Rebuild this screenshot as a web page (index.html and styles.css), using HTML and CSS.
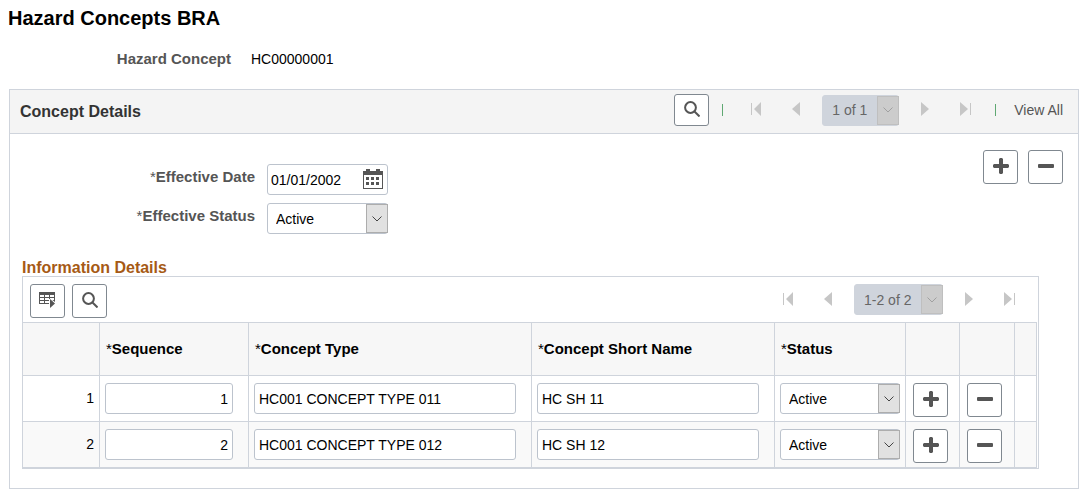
FILE: index.html
```html
<!DOCTYPE html>
<html lang="en">

<head>
    <meta charset="utf-8">
    <title>Hazard Concepts BRA</title>
    <meta name="viewport" content="width=device-width, initial-scale=1">
    <link rel="stylesheet" href="styles.css">
</head>

<body>

<!-- shared icons -->
<svg class="sprite" width="0" height="0" aria-hidden="true">
    <symbol id="search" viewBox="0 0 16 16">
        <circle cx="6.5" cy="6.5" r="5.4" fill="none" stroke="currentColor" stroke-width="2"/>
        <path d="M10.500 10.500l5 5" fill="none" stroke="currentColor" stroke-width="2"/>
    </symbol>
    <symbol id="plus" viewBox="0 0 16 16">
        <path d="M7 0h2l1 1v5h5l1 1v2l-1 1h-5v5l-1 1h-2l-1-1v-5h-5l-1-1v-2l1-1h5v-5z" fill="currentColor"/>
    </symbol>
    <symbol id="minus" viewBox="0 0 16 16">
        <rect x="0" y="6" width="16" height="4" rx="1" fill="currentColor"/>
    </symbol>
    <symbol id="grid" viewBox="0 0 17 16">
        <path d="M0 0h16v12H0z" fill="currentColor"/>
        <path d="M1 3h4v2H1zM6 3h4v2H6zM11 3h4v2h-4zM1 6h4v2H1zM6 6h4v2H6zM11 6h4v2h-4zM1 9h4v2H1zM6 9h4v2H6z" fill="#fff"/>
        <path d="M10 7h2l4 3h1v6h-7z" fill="#fff"/>
        <path d="M11 7l5 4.500-5 4.500z" fill="currentColor"/>
    </symbol>
    <symbol id="calendar" viewBox="0 0 20 20">
        <path d="M3 0h4v2h6V0h4v2h3v18H0V2h3zM1 6v13h18V6z" fill="currentColor" fill-rule="evenodd"/>
        <path d="M3 8h3v3H3zM8 8h3v3H8zM13 8h3v3h-3zM3 13h3v3H3zM8 13h3v3H8zM13 13h3v3h-3z" fill="currentColor"/>
    </symbol>
    <symbol id="chevron" viewBox="0 0 10 6">
        <path d="M.5.5L5 5 9.500.5" fill="none" stroke="currentColor" stroke-width="1"/>
    </symbol>
    <symbol id="first" viewBox="0 0 11 14">
        <path d="M0 1h1v12H0zM10 0v14L3 7z" fill="currentColor"/>
    </symbol>
    <symbol id="prev" viewBox="0 0 8 14">
        <path d="M8 0v14L0 7z" fill="currentColor"/>
    </symbol>
    <symbol id="next" viewBox="0 0 8 14">
        <path d="M0 0v14l8-7z" fill="currentColor"/>
    </symbol>
    <symbol id="last" viewBox="0 0 11 14">
        <path d="M0 0v14l8-7zM10 1h1v12h-1z" fill="currentColor"/>
    </symbol>
</svg>

<h1>Hazard Concepts BRA</h1>

<div class="key">
    <span class="key-label">Hazard Concept</span>
    <span>HC00000001</span>
</div>

<section class="panel">
    <div class="panel-header">
        <h2>Concept Details</h2>
        <button type="button" class="btn btn-search" aria-label="Find"><svg width="16" height="16"><use href="#search"/></svg></button>
        <span class="separator"></span>
        <div class="pager">
            <button type="button" class="nav" aria-label="First" disabled><svg width="11" height="14"><use href="#first"/></svg></button>
            <button type="button" class="nav" aria-label="Previous" disabled><svg width="8" height="14"><use href="#prev"/></svg></button>
            <span class="select select-page">
                <select aria-label="Row" disabled><option>1 of 1</option></select>
                <span class="arrow"><svg width="10" height="6"><use href="#chevron"/></svg></span>
            </span>
            <button type="button" class="nav" aria-label="Next" disabled><svg width="8" height="14"><use href="#next"/></svg></button>
            <button type="button" class="nav" aria-label="Last" disabled><svg width="11" height="14"><use href="#last"/></svg></button>
        </div>
        <span class="separator"></span>
        <a href="#" class="view-all">View All</a>
    </div>

    <form class="details">
        <div class="fields">
            <label for="eff_date"><span class="required">*</span>Effective Date</label>
            <span class="date">
                <input type="text" id="eff_date" name="eff_date" value="01/01/2002">
                <button type="button" class="date-button" aria-label="Choose a date"><svg width="20" height="20"><use href="#calendar"/></svg></button>
            </span>
            <label for="eff_status"><span class="required">*</span>Effective Status</label>
            <span class="select">
                <select id="eff_status" name="eff_status"><option>Active</option><option>Inactive</option></select>
                <span class="arrow"><svg width="10" height="6"><use href="#chevron"/></svg></span>
            </span>
        </div>
        <div class="row-buttons">
            <button type="button" class="btn" aria-label="Add"><svg width="16" height="16"><use href="#plus"/></svg></button>
            <button type="button" class="btn" aria-label="Delete"><svg width="16" height="16"><use href="#minus"/></svg></button>
        </div>
    </form>

    <h3>Information Details</h3>
    <div class="grid">
        <div class="grid-toolbar">
            <button type="button" class="btn" aria-label="Grid actions"><svg width="17" height="16"><use href="#grid"/></svg></button>
            <button type="button" class="btn" aria-label="Find"><svg width="16" height="16"><use href="#search"/></svg></button>
            <div class="pager">
                <button type="button" class="nav" aria-label="First" disabled><svg width="11" height="14"><use href="#first"/></svg></button>
                <button type="button" class="nav" aria-label="Previous" disabled><svg width="8" height="14"><use href="#prev"/></svg></button>
                <span class="select select-range">
                    <select aria-label="Rows" disabled><option>1-2 of 2</option></select>
                    <span class="arrow"><svg width="10" height="6"><use href="#chevron"/></svg></span>
                </span>
                <button type="button" class="nav" aria-label="Next" disabled><svg width="8" height="14"><use href="#next"/></svg></button>
                <button type="button" class="nav" aria-label="Last" disabled><svg width="11" height="14"><use href="#last"/></svg></button>
            </div>
        </div>
        <table>
            <colgroup>
                <col class="col-number">
                <col class="col-sequence">
                <col>
                <col class="col-name">
                <col class="col-status">
                <col class="col-add">
                <col class="col-delete">
                <col class="col-end">
            </colgroup>
            <thead>
                <tr>
                    <th></th>
                    <th><span class="required">*</span>Sequence</th>
                    <th><span class="required">*</span>Concept Type</th>
                    <th><span class="required">*</span>Concept Short Name</th>
                    <th><span class="required">*</span>Status</th>
                    <th></th>
                    <th></th>
                    <th></th>
                </tr>
            </thead>
            <tbody>
                <tr>
                    <td class="number">1</td>
                    <td><input type="text" class="sequence" aria-label="Sequence 1" value="1"></td>
                    <td><input type="text" aria-label="Concept Type 1" value="HC001 CONCEPT TYPE 011"></td>
                    <td><input type="text" aria-label="Concept Short Name 1" value="HC SH 11"></td>
                    <td class="status">
                        <span class="select">
                            <select aria-label="Status 1"><option>Active</option><option>Inactive</option></select>
                            <span class="arrow"><svg width="10" height="6"><use href="#chevron"/></svg></span>
                        </span>
                    </td>
                    <td class="action"><button type="button" class="btn" aria-label="Add row after 1"><svg width="16" height="16"><use href="#plus"/></svg></button></td>
                    <td class="action"><button type="button" class="btn" aria-label="Delete row 1"><svg width="16" height="16"><use href="#minus"/></svg></button></td>
                    <td></td>
                </tr>
                <tr>
                    <td class="number">2</td>
                    <td><input type="text" class="sequence" aria-label="Sequence 2" value="2"></td>
                    <td><input type="text" aria-label="Concept Type 2" value="HC001 CONCEPT TYPE 012"></td>
                    <td><input type="text" aria-label="Concept Short Name 2" value="HC SH 12"></td>
                    <td class="status">
                        <span class="select">
                            <select aria-label="Status 2"><option>Active</option><option>Inactive</option></select>
                            <span class="arrow"><svg width="10" height="6"><use href="#chevron"/></svg></span>
                        </span>
                    </td>
                    <td class="action"><button type="button" class="btn" aria-label="Add row after 2"><svg width="16" height="16"><use href="#plus"/></svg></button></td>
                    <td class="action"><button type="button" class="btn" aria-label="Delete row 2"><svg width="16" height="16"><use href="#minus"/></svg></button></td>
                    <td></td>
                </tr>
            </tbody>
        </table>
    </div>
</section>

</body>
</html>
```
FILE: styles.css
```css
* {
  box-sizing: border-box;
}

body {
  margin: 8px;
  font-family: "Liberation Sans", Arial, sans-serif;
  font-size: 14px;
  line-height: 20px;
  color: #000;
  background-color: #fff;
}

svg {
  display: block;
}

.sprite {
  position: absolute;
}

h1, h2, h3 {
  margin: 0;
  line-height: 20px;
}

h1 {
  font-size: 20px;
}

h2 {
  flex: 1;
  padding-top: 3px;
  font-size: 16px;
  color: #333;
}

h3 {
  margin: 25px 0 0 12px;
  font-size: 16px;
  line-height: 17px;
  color: #a65a15;
}

.key {
  display: flex;
  gap: 20px;
  margin-top: 21px;
}

.key-label {
  width: 223px;
  text-align: right;
  font-size: 15px;
  font-weight: bold;
  color: #555;
}

.required {
  font-weight: normal;
}

/* Controls */
input[type=text], select {
  display: block;
  width: 100%;
  height: 31px;
  padding: 0 4px;
  border: 1px solid #bcc3cd;
  border-radius: 3px;
  background-color: #fff;
  color: #000;
  font-family: inherit;
  font-size: 14px;
}

select {
  appearance: none;
  padding: 0 8px;
}

select:disabled {
  border-color: #cfd4dc;
  background-color: #cfd4dc;
  color: #666;
  opacity: 1;
}

.select {
  position: relative;
  display: block;
}

.arrow {
  position: absolute;
  top: 1px;
  right: 0;
  bottom: 1px;
  display: flex;
  align-items: center;
  justify-content: center;
  width: 22px;
  border: 1px solid #adadad;
  background-color: #e1e1e1;
  color: #444;
  pointer-events: none;
}

select:disabled + .arrow {
  border-color: #bfbfbf;
  background-color: #ccc;
  color: #a0a0a0;
}

.btn {
  display: flex;
  align-items: center;
  justify-content: center;
  width: 35px;
  height: 34px;
  padding: 0 0 2px;
  border: 1px solid #808890;
  border-radius: 3px;
  background-color: #fff;
  color: #555;
  cursor: pointer;
}

.btn-search {
  height: 32px;
}

/* Pager */
.pager {
  display: flex;
  align-items: center;
}

.nav {
  display: flex;
  justify-content: center;
  width: 40px;
  padding: 0 0 2px;
  border: none;
  background: none;
  color: #c6c6c6;
}

.select-page {
  width: 77px;
  margin: 0 6px;
}

.select-range {
  width: 89px;
  margin: 0 6px;
}

.select-page select, .select-range select {
  padding: 0 9px;
}

.separator {
  width: 1px;
  height: 12px;
  background-color: #5fa872;
}

/* Concept Details */
.panel {
  margin: 20px 0 0 1px;
  padding-bottom: 19px;
  border: 1px solid #cfd4dc;
}

.panel-header {
  display: flex;
  align-items: center;
  height: 44px;
  padding: 0 15px 3px 10px;
  border-bottom: 1px solid #cfd4dc;
  background-color: #f4f4f4;
}

.panel-header .separator {
  margin: 0 10px;
}

.panel-header .pager {
  margin-left: 3px;
}

.btn-search {
  margin-right: 3px;
}

.view-all {
  margin-left: 8px;
  color: #555;
  text-decoration: none;
}

.details {
  display: flex;
  justify-content: space-between;
  padding: 16px 15px 0 12px;
}

.fields {
  display: grid;
  grid-template-columns: 233px 121px;
  column-gap: 12px;
  row-gap: 8px;
  padding-top: 14px;
}

.fields label {
  padding-top: 3px;
  text-align: right;
  font-size: 15px;
  font-weight: bold;
  color: #555;
}

.date {
  position: relative;
}

.date input[type=text] {
  padding-left: 3px;
}

.date-button {
  position: absolute;
  top: 5px;
  right: 5px;
  padding: 0;
  border: none;
  background: none;
  color: #555;
}

.row-buttons {
  display: flex;
  gap: 10px;
}

/* Information Details */
.grid {
  margin: 0 39px 0 12px;
  padding-right: 1px;
  border: 1px solid #cfd4dc;
}

.grid-toolbar {
  display: flex;
  align-items: center;
  gap: 7px;
  height: 45px;
  padding: 2px 8px 0 7px;
}

.grid-toolbar .pager {
  margin: 0 0 2px auto;
}

table {
  width: 100%;
  table-layout: fixed;
  border-spacing: 0;
}

th, td {
  border-top: 1px solid #cfd4dc;
  border-left: 1px solid #cfd4dc;
}

th:first-child, td:first-child {
  border-left: none;
}

th:last-child, td:last-child {
  border-right: 1px solid #cfd4dc;
}

tr:last-child td {
  border-bottom: 1px solid #cfd4dc;
}

tr:nth-child(even) td {
  background-color: #f9f9f9;
}

th {
  height: 53px;
  padding: 0 6px;
  background-color: #f7f7f7;
  font-size: 15px;
  text-align: left;
}

td {
  padding: 7px 15px 4px 5px;
  vertical-align: top;
}

.number {
  padding-right: 5px;
  line-height: 31px;
  text-align: right;
}

td .sequence {
  text-align: right;
}

.status {
  padding-right: 5px;
}

.action {
  padding: 7px 7px 4px;
}

.col-number {
  width: 76px;
}

.col-sequence {
  width: 149px;
}

.col-name {
  width: 243px;
}

.col-status {
  width: 131px;
}

.col-add {
  width: 54px;
}

.col-delete {
  width: 55px;
}

.col-end {
  width: 23px;
}
```
